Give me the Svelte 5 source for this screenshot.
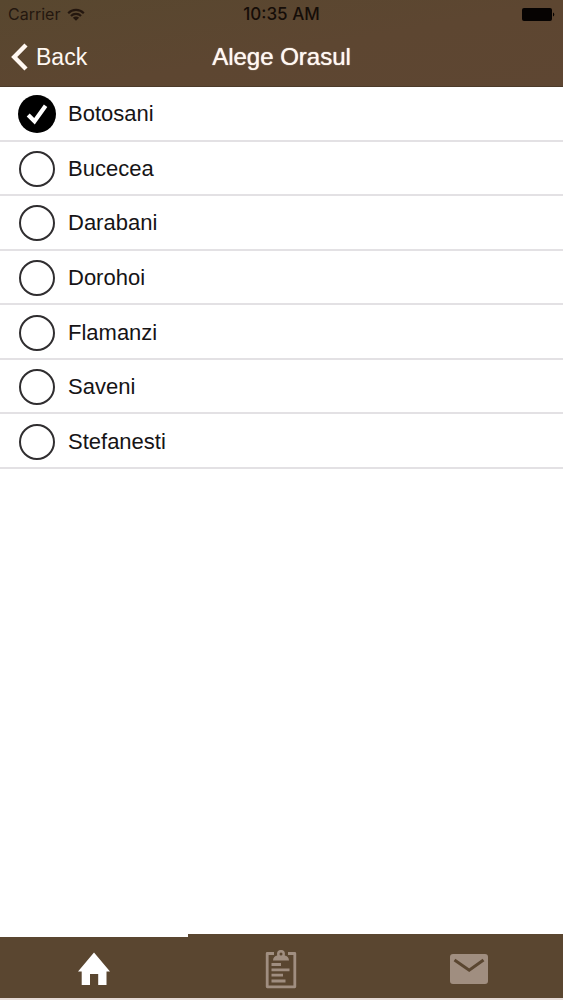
<script>
    const cities = ["Botosani", "Bucecea", "Darabani", "Dorohoi", "Flamanzi", "Saveni", "Stefanesti"]

    let selectedCity = $state("Botosani")
    let activeTab = $state("home")
</script>

<div class="screen">
    <header>
        <div class="statusBar">
            <div class="carrier">
                <span>Carrier</span>
                <svg width="18" height="13" viewBox="0 0 18 13" aria-hidden="true">
                    <g fill="none" stroke="currentColor" stroke-width="2.2">
                        <path d="M1.2 5.2a11 11 0 0 1 15.6 0" />
                        <path d="M4 8a7 7 0 0 1 10 0" />
                    </g>
                    <path d="M9 12.8L5.9 9.7a4.4 4.4 0 0 1 6.2 0z" fill="currentColor" />
                </svg>
            </div>
            <span class="time">10:35 AM</span>
            <svg class="battery" width="33" height="13" viewBox="0 0 33 13" aria-hidden="true">
                <rect width="30" height="13" rx="2" fill="currentColor" />
                <path d="M31 4.500a2.200 2.200 0 0 1 0 4z" fill="currentColor" />
            </svg>
        </div>

        <nav class="navBar">
            <button class="back">
                <svg width="17" height="28" viewBox="0 0 17 28" aria-hidden="true">
                    <path d="M15 2L3.200 14L15 26" fill="none" stroke="currentColor" stroke-width="4.400" />
                </svg>
                <span>Back</span>
            </button>
            <h1>Alege Orasul</h1>
        </nav>
    </header>

    <main>
        <div class="cityList" role="radiogroup" aria-label="Alege Orasul">
            {#each cities as city}
                <label class="city">
                    <span class="mark">
                        <input type="radio" name="city" value={city} bind:group={selectedCity}>
                        {#if selectedCity === city}
                            <svg width="38" height="38" viewBox="0 0 38 38" aria-hidden="true">
                                <circle cx="19" cy="19" r="19" fill="#000" />
                                <path d="M10.2 20l6.300 6.300L27.600 10.800" fill="none" stroke="#fff" stroke-width="4.200" />
                            </svg>
                        {/if}
                    </span>
                    <span>{city}</span>
                </label>
            {/each}
        </div>
    </main>

    <nav class="tabBar">
        <button class="tab" class:active={activeTab === "home"} aria-label="Home" onclick={() => activeTab = "home"}>
            <svg width="34" height="34" viewBox="0 0 34 34" aria-hidden="true">
                <path d="M17 0.500L33 19.500H29.500V33H21.200V22H13V33H4.700V19.500H1z" fill="currentColor" />
            </svg>
        </button>
        <button class="tab" class:active={activeTab === "orders"} aria-label="Orders" onclick={() => activeTab = "orders"}>
            <svg width="32" height="40" viewBox="0 0 32 40" aria-hidden="true">
                <path d="M9 4.500H2.200V37.800H29.800V4.500H23" fill="none" stroke="currentColor" stroke-width="2.800" stroke-linejoin="round" />
                <path fill-rule="evenodd" d="M8 11.500c0-3.200 2-4.600 4.200-5.100C11.600 2.500 13.200 1 16 1s4.400 1.500 3.800 5.400c2.200.5 4.200 1.900 4.200 5.100zM16 3.600a1.500 1.500 0 1 0 0 3 1.500 1.500 0 0 0 0-3z" fill="currentColor" />
                <path d="M6.500 15.500H16M6.500 20.800H24.500M6.500 26.200H18M6.500 32H20.500" stroke="currentColor" stroke-width="2.800" />
            </svg>
        </button>
        <button class="tab" class:active={activeTab === "messages"} aria-label="Messages" onclick={() => activeTab = "messages"}>
            <svg width="38" height="30" viewBox="0 0 38 30" aria-hidden="true">
                <rect width="38" height="30" rx="3" fill="currentColor" />
                <path d="M4.500 6L19.200 16.200L33.500 6" fill="none" stroke="#5a4630" stroke-width="3" />
            </svg>
        </button>
    </nav>
</div>

<style>
    :global(body) {
        background-color: white;
    }

    .screen {
        display: flex;
        flex-direction: column;
        min-height: 100vh;
        font-family: "Liberation Sans", Arial, sans-serif;
        background-color: white;
    }

    header {
        background: linear-gradient(170deg, #58472f 0%, #5d4631 55%, #5e4632 100%);
    }

    .statusBar {
        display: grid;
        grid-template-columns: 1fr auto 1fr;
        align-items: center;
        height: 28px;
        padding: 0 8px;
        font-family: Inter, Roboto, sans-serif;
        font-size: 16px;
        color: #24170f;
    }

    .carrier {
        display: flex;
        align-items: center;
        gap: 7px;
    }

    .time {
        font-size: 17px;
        font-weight: 500;
        color: #150d08;
    }

    .battery {
        justify-self: end;
        color: #060302;
    }

    .navBar {
        display: grid;
        grid-template-columns: 1fr auto 1fr;
        align-items: center;
        height: 58px;
        border-bottom: 1px solid #4c3b2a;
        color: #fff8f2;
    }

    button {
        margin: 0;
        border: none;
        background: none;
        font: inherit;
        color: inherit;
        cursor: pointer;
    }

    .back {
        display: flex;
        align-items: center;
        justify-self: start;
        gap: 8px;
        padding: 0 11px;
        font-size: 23px;
    }

    h1 {
        margin: 0;
        font-size: 24px;
        font-weight: 500;
        text-shadow: 0 0 1px currentColor;
    }

    main {
        flex: 1;
    }

    /* every row gets an equal share of the list */
    .cityList {
        display: grid;
        grid-auto-rows: 1fr;
        height: 382px;
    }

    .city {
        display: flex;
        align-items: center;
        gap: 12px;
        padding: 2px 18px 0;
        border-bottom: 2px solid #e3e1e4;
        font-size: 22px;
        color: #161416;
        cursor: pointer;
    }

    .mark {
        display: grid;
        place-items: center;
        width: 38px;
        height: 38px;
    }

    .mark > * {
        grid-area: 1 / 1;
    }

    input {
        appearance: none;
        box-sizing: border-box;
        width: 36px;
        height: 36px;
        margin: 0;
        border: 2px solid #302e30;
        border-radius: 50%;
    }

    .tabBar {
        display: grid;
        grid-template-columns: repeat(3, 1fr);
        height: 64px;
        border-bottom: 2px solid #e6dcd8;
        background-color: #5a4630;
    }

    .tab {
        display: flex;
        align-items: center;
        justify-content: center;
        padding: 3px 0 0;
        border-top: 3px solid transparent;
        color: #a08e80;
    }

    .tab.active {
        border-top-color: white;
        color: white;
    }
</style>
